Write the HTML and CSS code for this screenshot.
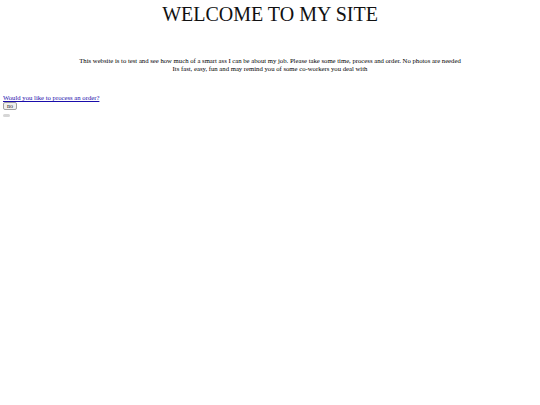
FILE: index.html
```html
<!DOCTYPE html>
<html>
<head>
<meta charset="utf-8">
<link rel="stylesheet" href="styles.css">
</head>
<body>
<h1 class="title">WELCOME TO MY SITE</h1>
<p class="intro">This website is to test and see how much of a smart ass I can be about my job. Please take some time, process and order. No photos are needed<br>Its fast, easy, fun and may remind you of some co-workers you deal with</p>
<div class="order">
  <a class="order-link" href="#">Would you like to process an order?</a><br>
  <button class="btn-no">no</button>
  <div class="pill"></div>
</div>
</body>
</html>
```
FILE: styles.css
```css
body {
  margin: 3px;
  font-family: "Liberation Serif", serif;
  font-size: 6.7px;
  color: #000;
  background: #fff;
}
.title {
  margin: 0;
  font-size: 20px;
  font-weight: normal;
  text-align: center;
  line-height: 23px;
  color: #111;
}
.intro {
  margin: 31px 0 0;
  text-align: center;
  line-height: 8px;
}
.order {
  margin-top: 21px;
  line-height: 8px;
}
.order-link {
  color: #1a0dab;
}
.btn-no {
  display: block;
  font-family: "Liberation Serif", serif;
  font-size: 6px;
  padding: 0 3px;
  height: 8px;
  line-height: 6px;
  border: 1px solid #a0a0a0;
  border-radius: 2px;
  background: #efefef;
  color: #222;
  margin: 0;
}
.pill {
  width: 7px;
  height: 3px;
  margin-top: 4px;
  border-radius: 2px;
  background: #d6d6d6;
}
```
